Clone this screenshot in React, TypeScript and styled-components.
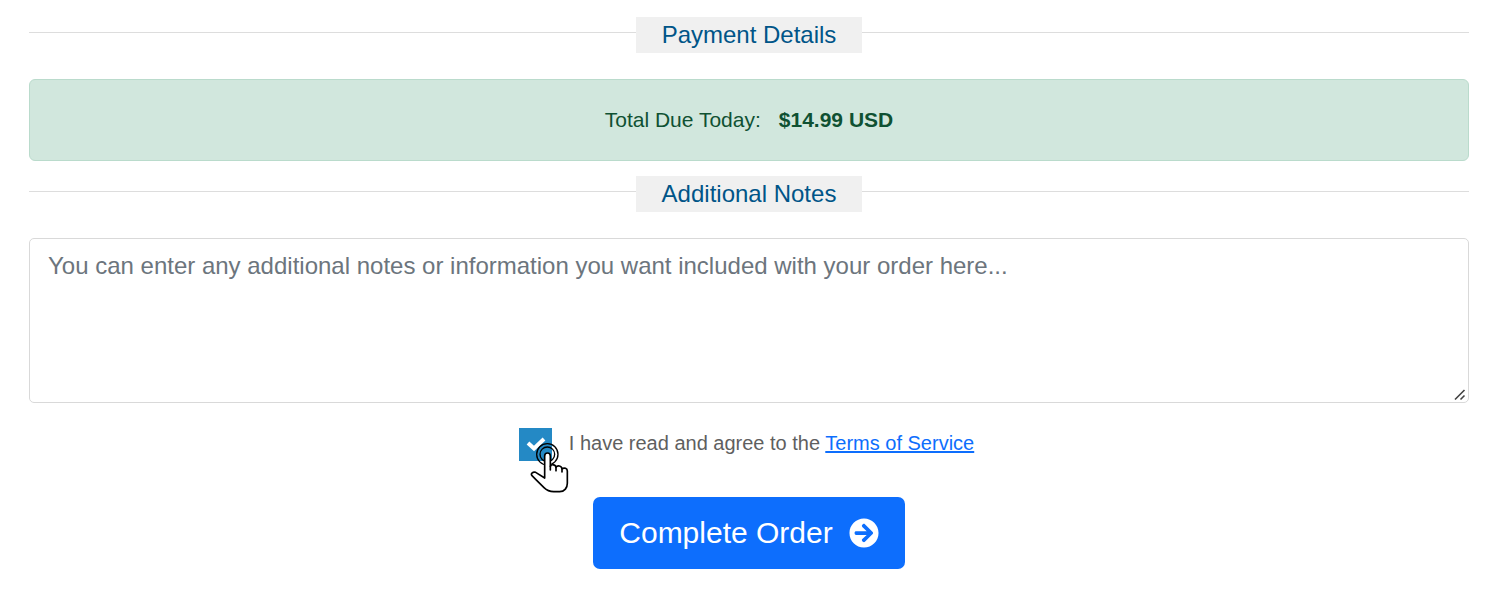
import React, { useState } from "react";
import styled, { createGlobalStyle } from "styled-components";
import { FaArrowCircleRight } from "react-icons/fa";

const GlobalStyle = createGlobalStyle`
  *, *::before, *::after { box-sizing: border-box; }
  body {
    margin: 0;
    background: #fff;
    font-family: "Liberation Sans", Arial, Helvetica, sans-serif;
  }
`;

const Form = styled.form`
  display: flex;
  flex-direction: column;
  padding: 17px 26px 20px 29px;
`;

const Heading = styled.h2`
  display: flex;
  align-items: flex-start;
  margin: 0 0 26px;
  font-size: 24px;
  font-weight: 400;
  line-height: 36px;
  color: #058;

  &::before,
  &::after {
    content: "";
    flex: 1;
    margin-top: 15px;
    border-top: 1px solid #ddd;
  }
`;

const HeadingText = styled.span`
  width: 226px;
  text-align: center;
  background: #f0f0f0;
`;

const TotalDue = styled.div`
  display: flex;
  justify-content: center;
  gap: 18px;
  margin-bottom: 15px;
  padding: 24px;
  border: 1px solid #badbcc;
  border-radius: 6px;
  background: #d1e7dd;
  color: #0f5132;
  font-size: 21px;
  line-height: 32px;
`;

const NotesHolder = styled.div`
  position: relative;
`;

const Notes = styled.textarea`
  display: block;
  width: 100%;
  height: 165px;
  padding: 9px 18px;
  border: 1px solid #d9d9d9;
  border-radius: 5px;
  background: #fff;
  color: #212529;
  font-family: inherit;
  font-size: 24px;
  line-height: 36px;
  resize: vertical;

  &::placeholder {
    color: #6c757d;
    opacity: 1;
  }

  &::-webkit-resizer {
    background: transparent;
  }
`;

const Grip = styled.svg`
  position: absolute;
  right: 3px;
  bottom: 2px;
  pointer-events: none;
`;

const Agreement = styled.div`
  display: flex;
  align-items: flex-start;
  justify-content: center;
  gap: 17px;
  margin: 25px 0 36px;
  padding-right: 5px;
`;

const CheckHolder = styled.span`
  position: relative;
  display: block;
  width: 33px;
  height: 33px;
`;

const Checkbox = styled.input`
  appearance: none;
  display: block;
  width: 100%;
  height: 100%;
  margin: 0;
  border: 1px solid #2489c5;
  background: #fff;

  &:checked { background: #2489c5; }
`;

const CheckMark = styled.svg`
  position: absolute;
  inset: 0;
  pointer-events: none;
`;

const Pointer = styled.svg`
  position: absolute;
  left: 11px;
  top: 14px;
  pointer-events: none;
`;

const AgreementLabel = styled.label`
  color: #5f5f5f;
  font-size: 20px;
  line-height: 30px;
`;

const TermsLink = styled.a`
  color: #0d6efd;
  text-decoration: underline;
`;

const SubmitButton = styled.button`
  display: flex;
  align-items: center;
  align-self: center;
  gap: 16px;
  padding: 13px 26px;
  border: 0;
  border-radius: 7px;
  background: #0d6efd;
  color: #fff;
  font-family: inherit;
  font-size: 30px;
  line-height: 46px;
  cursor: pointer;
`;

const HandPointer = () => (
  <Pointer width="40" height="51" viewBox="60 66 120 153" fill="none" stroke="#000" strokeWidth="5" strokeLinecap="round" strokeLinejoin="round" aria-hidden="true">
    <circle cx="112" cy="103" r="32" strokeWidth="4" />
    <circle cx="112" cy="103" r="22" strokeWidth="4" />
    <path
      fill="#fff"
      d="M104 169V108C104 96 121 96 121 108V139C124 132 137 133 138 142C142 135 155 137 156 146C163 142 172 145 172 153V190C172 203 164 215 149 215H131C117 215 110 211 102 203L80 181L66 167C61 161 69 154 77 157L104 174Z"
    />
    <path d="M121 139V150M138 142V152M156 146V156" />
  </Pointer>
);

export default function App() {
  const [agreed, setAgreed] = useState(true);

  return (
    <>
      <GlobalStyle />
      <Form onSubmit={(event) => event.preventDefault()}>
        <Heading>
          <HeadingText>Payment Details</HeadingText>
        </Heading>
        <TotalDue>
          <span>Total Due Today:</span>
          <strong>$14.99 USD</strong>
        </TotalDue>
        <Heading>
          <HeadingText>Additional Notes</HeadingText>
        </Heading>
        <NotesHolder>
          <Notes
            aria-label="Additional Notes"
            placeholder="You can enter any additional notes or information you want included with your order here..."
          />
          <Grip width="12" height="12" viewBox="0 0 12 12" stroke="#444" strokeWidth="1.6" aria-hidden="true">
            <path d="M1 10.500L10.500 1M6.500 10.500L10.500 6.500" />
          </Grip>
        </NotesHolder>
        <Agreement>
          <CheckHolder>
            <Checkbox
              id="accept-terms"
              type="checkbox"
              checked={agreed}
              onChange={(event) => setAgreed(event.target.checked)}
            />
            {agreed && (
              <CheckMark width="33" height="33" viewBox="0 0 33 33" fill="none" stroke="#fff" strokeWidth="4" aria-hidden="true">
                <path d="M9 15L15 20.500L25 11" />
              </CheckMark>
            )}
            <HandPointer />
          </CheckHolder>
          <AgreementLabel htmlFor="accept-terms">
            I have read and agree to the <TermsLink href="#terms">Terms of Service</TermsLink>
          </AgreementLabel>
        </Agreement>
        <SubmitButton type="submit">
          Complete Order
          <FaArrowCircleRight size={30} aria-hidden="true" />
        </SubmitButton>
      </Form>
    </>
  );
}
